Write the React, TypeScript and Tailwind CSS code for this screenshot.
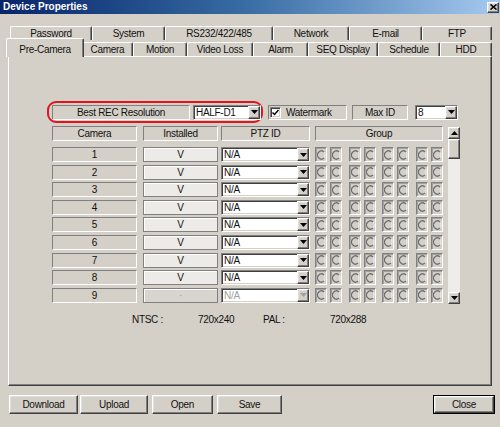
import React from "react";

const RAISED =
  "border border-t-white border-l-white border-r-[#404040] border-b-[#404040] shadow-[inset_-1px_-1px_0_#808080,inset_1px_1px_0_#dfdfdf]";
const SUNK =
  "border border-t-[#808080] border-l-[#808080] border-r-white border-b-white";
const FIELD =
  "border border-t-[#808080] border-l-[#808080] border-r-white border-b-white shadow-[inset_1px_1px_0_#404040,inset_-1px_-1px_0_#d4d0c8]";

function Arrow({ gray = false, up = false }: { gray?: boolean; up?: boolean }) {
  return (
    <svg width="7" height="4" viewBox="0 0 7 4">
      {up ? (
        <path d="M0 4 L7 4 L3.5 0 Z" fill={gray ? "#a0a0a0" : "#000"} />
      ) : (
        <path d="M0 0 L7 0 L3.5 4 Z" fill={gray ? "#a0a0a0" : "#000"} />
      )}
    </svg>
  );
}

function DropBtn({ gray = false }: { gray?: boolean }) {
  return (
    <div className={`w-[12px] h-full bg-[#d4d0c8] flex items-center justify-center ${RAISED}`}>
      <Arrow gray={gray} />
    </div>
  );
}

function Radio() {
  return (
    <svg width="10" height="10" viewBox="0 0 10 10">
      <circle cx="5" cy="5" r="4" fill="#d4d0c8" stroke="#e8e8e8" strokeWidth="1.2" />
      <path d="M8 1.9 A4 4 0 1 0 8 8.1" fill="none" stroke="#6e6e6e" strokeWidth="1.3" />
    </svg>
  );
}

function GroupBox() {
  return (
    <div className={`w-[12px] h-[15px] flex items-center justify-center bg-[#d4d0c8] ${SUNK} shadow-[inset_1px_1px_0_#a0a0a0]`}>
      <Radio />
    </div>
  );
}

function Pair() {
  return (
    <div className="flex gap-[3px]">
      <GroupBox />
      <GroupBox />
    </div>
  );
}

function Row({ n, disabled = false }: { n: number; disabled?: boolean }) {
  return (
    <div className="flex h-[15px]">
      <div className={`w-[85px] h-[15px] flex items-center justify-center bg-[#d4d0c8] ${SUNK}`}>{n}</div>
      <div
        className={`ml-[6px] w-[75px] h-[15px] flex items-center justify-center border border-[#808080] shadow-[inset_1px_1px_0_#ffffff] ${
          disabled ? "bg-[#d8d5cf] text-[#9a9a9a]" : "bg-[#ecebe7]"
        }`}
      >
        {disabled ? "·" : "V"}
      </div>
      <div className={`ml-[3px] w-[89px] h-[15px] flex items-center bg-white ${FIELD}`}>
        <span className={`flex-1 pl-[2px] ${disabled ? "text-[#a0a0a0]" : ""}`}>N/A</span>
        <DropBtn gray={disabled} />
      </div>
      <div className="ml-[5px] w-[128px] flex justify-between">
        <Pair />
        <Pair />
        <Pair />
        <Pair />
      </div>
    </div>
  );
}

export default function App() {
  return (
    <div className="w-[500px] h-[427px] bg-[#d4d0c8] flex flex-col text-[10px] tracking-[-0.3px] text-[#111] font-['Liberation_Sans',Arial,sans-serif] overflow-hidden">
      {/* title bar */}
      <div className="h-[14px] flex items-center justify-between bg-gradient-to-r from-[#0a246a] via-[#3a6ea5] to-[#a6caf0]">
        <span className="pl-[3px] text-white font-bold text-[10px] tracking-normal leading-none">Device Properties</span>
        <div className={`mr-[1px] w-[12px] h-[11px] flex items-center justify-center bg-[#d4d0c8] ${RAISED}`}>
          <svg width="7" height="6" viewBox="0 0 7 6">
            <path d="M0.5 0.5 L6.5 5.5 M6.5 0.5 L0.5 5.5" stroke="#000" strokeWidth="1.6" />
          </svg>
        </div>
      </div>

      {/* tabs */}
      <div className="pt-[12px]">
        <div className="flex h-[14px] pl-[10px]">
          {[
            ["Password", "w-[82px]"],
            ["System", "w-[73px]"],
            ["RS232/422/485", "w-[108px]"],
            ["Network", "w-[76px]"],
            ["E-mail", "w-[73px]"],
            ["FTP", "w-[70px]"],
          ].map(([t, w]) => (
            <div
              key={t}
              className={`${w} h-[14px] flex items-center justify-center rounded-t-[2px] border-t border-l border-r border-t-white border-l-white border-r-[#404040] shadow-[inset_-1px_0_0_#808080]`}
            >
              {t}
            </div>
          ))}
        </div>
        <div className="flex items-end h-[16px] pl-[8px]">
          <div className="relative z-10 -ml-[2px] -mr-[2px] mb-[-1px] w-[78px] h-[19px] flex items-start pt-[3px] justify-center bg-[#d4d0c8] rounded-t-[2px] border-t border-l border-r border-t-white border-l-white border-r-[#404040] shadow-[inset_-1px_0_0_#808080]">
            Pre-Camera
          </div>
          {[
            ["Camera", "w-[51px]"],
            ["Motion", "w-[54px]"],
            ["Video Loss", "w-[66px]"],
            ["Alarm", "w-[55px]"],
            ["SEQ Display", "w-[70px]"],
            ["Schedule", "w-[62px]"],
            ["HDD", "w-[52px]"],
          ].map(([t, w]) => (
            <div
              key={t}
              className={`${w} h-[14px] flex items-center justify-center rounded-t-[2px] border-t border-l border-r border-t-white border-l-white border-r-[#404040] shadow-[inset_-1px_0_0_#808080]`}
            >
              {t}
            </div>
          ))}
        </div>
      </div>

      {/* panel */}
      <div className="mx-[8px] h-[330px] border border-t-white border-l-white border-r-[#404040] border-b-[#404040] shadow-[inset_-1px_-1px_0_#808080] flex flex-col pt-[44px]">
        {/* top row */}
        <div className="flex items-center ml-[38px]">
          <div className="w-[216px] h-[22px] border-2 border-[#e3141b] rounded-[9px] flex items-center pl-[3px] gap-[3px]">
            <div className={`w-[138px] h-[15px] flex items-center justify-center bg-[#d4d0c8] ${SUNK}`}>Best REC Resolution</div>
            <div className={`w-[68px] h-[15px] flex items-center bg-white ${FIELD}`}>
              <span className="flex-1 pl-[2px]">HALF-D1</span>
              <DropBtn />
            </div>
          </div>
          <div className={`ml-[5px] w-[79px] h-[15px] flex items-center bg-[#d4d0c8] ${SUNK}`}>
            <div className={`ml-[1px] w-[11px] h-[11px] bg-white flex items-center justify-center ${FIELD}`}>
              <svg width="7" height="7" viewBox="0 0 7 7">
                <path d="M0.5 3.5 L2.5 5.5 L6.5 1" stroke="#000" strokeWidth="1.5" fill="none" />
              </svg>
            </div>
            <span className="ml-[5px]">Watermark</span>
          </div>
          <div className={`ml-[5px] w-[56px] h-[15px] flex items-center justify-center bg-[#d4d0c8] ${SUNK}`}>Max ID</div>
          <div className={`ml-[7px] w-[43px] h-[15px] flex items-center bg-white ${FIELD}`}>
            <span className="flex-1 pl-[2px]">8</span>
            <DropBtn />
          </div>
        </div>

        {/* table */}
        <div className="flex ml-[43px] mt-[3px]">
          <div className="flex flex-col">
            <div className="flex h-[15px]">
              <div className={`w-[85px] h-[15px] flex items-center justify-center bg-[#d4d0c8] ${SUNK}`}>Camera</div>
              <div className={`ml-[6px] w-[75px] h-[15px] flex items-center justify-center bg-[#d4d0c8] ${SUNK}`}>Installed</div>
              <div className={`ml-[3px] w-[89px] h-[15px] flex items-center justify-center bg-[#d4d0c8] ${SUNK}`}>PTZ ID</div>
              <div className={`ml-[5px] w-[128px] h-[15px] flex items-center justify-center bg-[#d4d0c8] ${SUNK}`}>Group</div>
            </div>
            <div className="mt-[6px] flex flex-col gap-[2.6px]">
              {[1, 2, 3, 4, 5, 6, 7, 8].map((n) => (
                <Row key={n} n={n} />
              ))}
              <Row n={9} disabled />
            </div>
          </div>
          {/* scrollbar */}
          <div className="ml-[5px] mt-[1px] w-[12px] h-[177px] flex flex-col bg-[#eeede9]">
            <div className={`h-[12px] flex items-center justify-center bg-[#d4d0c8] ${RAISED}`}>
              <Arrow up />
            </div>
            <div className={`h-[20px] bg-[#d4d0c8] ${RAISED}`} />
            <div className="flex-1" />
            <div className={`h-[12px] flex items-center justify-center bg-[#d4d0c8] ${RAISED}`}>
              <Arrow />
            </div>
          </div>
        </div>

        {/* footer info */}
        <div className="flex mt-[9px] ml-[123px] h-[12px] items-center">
          <span className="w-[66px]">NTSC :</span>
          <span className="w-[65px]">720x240</span>
          <span className="w-[67px]">PAL :</span>
          <span>720x288</span>
        </div>
      </div>

      {/* bottom buttons */}
      <div className="flex items-center mt-[9px] px-[9px]">
        <div className={`w-[69px] h-[19px] flex items-center justify-center bg-[#d4d0c8] ${RAISED}`}>Download</div>
        <div className={`ml-[2px] w-[68px] h-[19px] flex items-center justify-center bg-[#d4d0c8] ${RAISED}`}>Upload</div>
        <div className={`ml-[4px] w-[61px] h-[19px] flex items-center justify-center bg-[#d4d0c8] ${RAISED}`}>Open</div>
        <div className={`ml-[4px] w-[65px] h-[19px] flex items-center justify-center bg-[#d4d0c8] ${RAISED}`}>Save</div>
        <div className="ml-auto mr-[-4px] w-[62px] h-[19px] border border-black">
          <div className={`w-full h-full flex items-center justify-center bg-[#d4d0c8] ${RAISED}`}>Close</div>
        </div>
      </div>
    </div>
  );
}
